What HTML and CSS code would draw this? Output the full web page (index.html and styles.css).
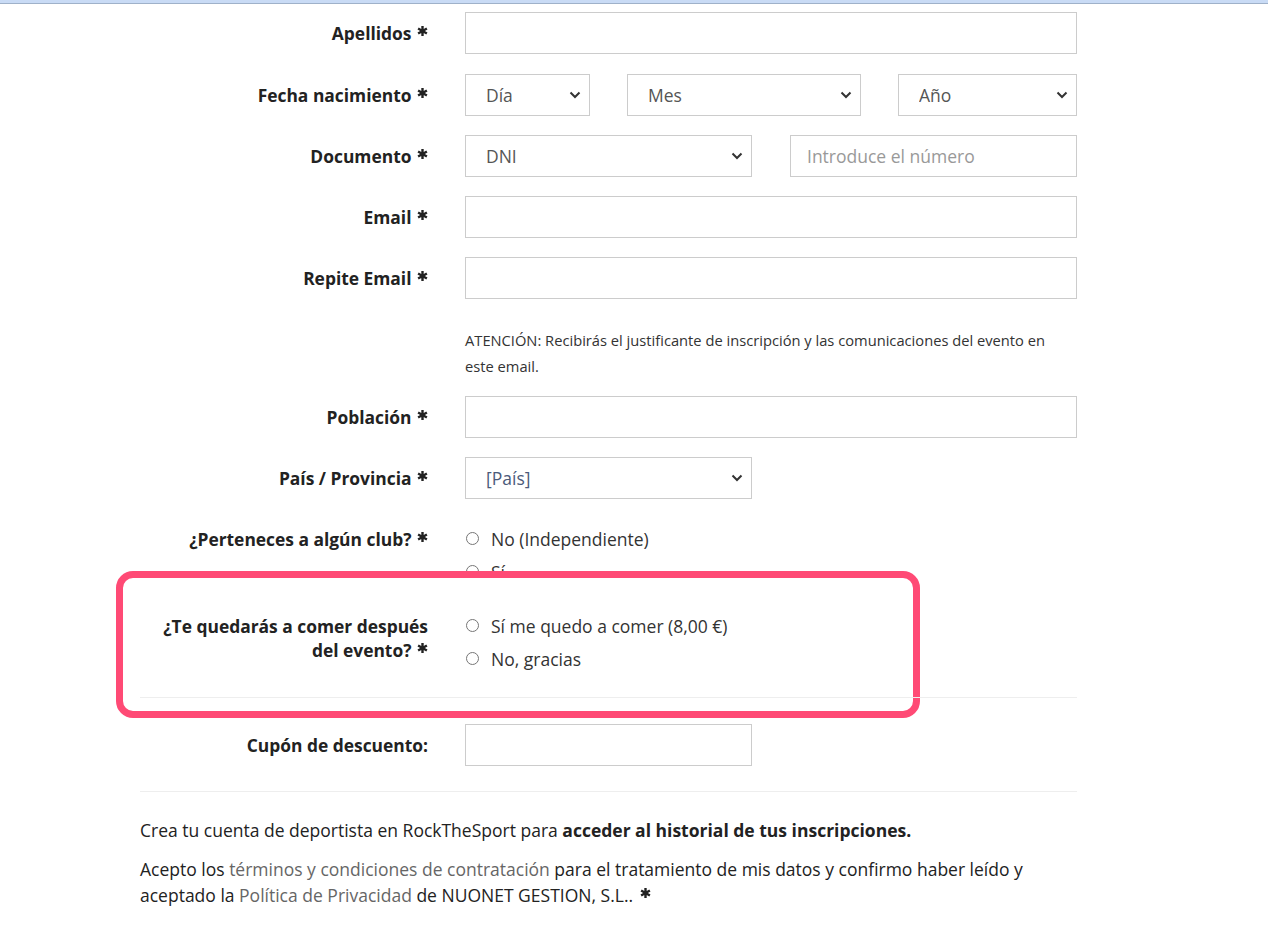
FILE: index.html
```html
<!DOCTYPE html>
<html>
<head>
<meta charset="utf-8">
<title>Inscripción</title>
<link rel="stylesheet" href="styles.css">
</head>
<body>
<div class="topbar"></div>
<form class="form">
	<div class="row first">
		<label class="label">Apellidos <svg class="req" viewBox="0 0 12 12"><path d="M6 0.5V11.5M1.2 3.2L10.8 8.8M1.2 8.8L10.8 3.2"/></svg></label>
		<div class="field"><input class="input" type="text"></div>
	</div>
	<div class="row">
		<label class="label">Fecha nacimiento <svg class="req" viewBox="0 0 12 12"><path d="M6 0.5V11.5M1.2 3.2L10.8 8.8M1.2 8.8L10.8 3.2"/></svg></label>
		<div class="field split">
			<select class="input dia"><option>Día</option></select>
			<select class="input mes"><option>Mes</option></select>
			<select class="input anio"><option>Año</option></select>
		</div>
	</div>
	<div class="row">
		<label class="label">Documento <svg class="req" viewBox="0 0 12 12"><path d="M6 0.5V11.5M1.2 3.2L10.8 8.8M1.2 8.8L10.8 3.2"/></svg></label>
		<div class="field split">
			<select class="input half"><option>DNI</option></select>
			<input class="input half" type="text" placeholder="Introduce el número">
		</div>
	</div>
	<div class="row">
		<label class="label">Email <svg class="req" viewBox="0 0 12 12"><path d="M6 0.5V11.5M1.2 3.2L10.8 8.8M1.2 8.8L10.8 3.2"/></svg></label>
		<div class="field"><input class="input" type="text"></div>
	</div>
	<div class="row">
		<label class="label">Repite Email <svg class="req" viewBox="0 0 12 12"><path d="M6 0.5V11.5M1.2 3.2L10.8 8.8M1.2 8.8L10.8 3.2"/></svg></label>
		<div class="field"><input class="input" type="text"></div>
	</div>
	<div class="row help-row">
		<div></div>
		<p class="help">ATENCIÓN: Recibirás el justificante de inscripción y las comunicaciones del evento en este email.</p>
	</div>
	<div class="row">
		<label class="label">Población <svg class="req" viewBox="0 0 12 12"><path d="M6 0.5V11.5M1.2 3.2L10.8 8.8M1.2 8.8L10.8 3.2"/></svg></label>
		<div class="field"><input class="input" type="text"></div>
	</div>
	<div class="row">
		<label class="label">País / Provincia <svg class="req" viewBox="0 0 12 12"><path d="M6 0.5V11.5M1.2 3.2L10.8 8.8M1.2 8.8L10.8 3.2"/></svg></label>
		<div class="field"><select class="input half pais"><option>[País]</option></select></div>
	</div>
	<div class="row radio-row">
		<label class="label">¿Perteneces a algún club? <svg class="req" viewBox="0 0 12 12"><path d="M6 0.5V11.5M1.2 3.2L10.8 8.8M1.2 8.8L10.8 3.2"/></svg></label>
		<div class="field radios">
			<label class="radio"><input type="radio" name="club">No (Independiente)</label>
			<label class="radio"><input type="radio" name="club">Sí</label>
		</div>
	</div>
	<div class="highlight">
		<div class="row radio-row">
			<label class="label">¿Te quedarás a comer después del evento? <svg class="req" viewBox="0 0 12 12"><path d="M6 0.5V11.5M1.2 3.2L10.8 8.8M1.2 8.8L10.8 3.2"/></svg></label>
			<div class="field radios">
				<label class="radio"><input type="radio" name="comer">Sí me quedo a comer (8,00 €)</label>
				<label class="radio"><input type="radio" name="comer">No, gracias</label>
			</div>
		</div>
		<hr class="sep">
	</div>
	<div class="row coupon">
		<label class="label">Cupón de descuento:</label>
		<div class="field"><input class="input half" type="text"></div>
	</div>
	<hr class="sep">
	<p class="text">Crea tu cuenta de deportista en RockTheSport para <b>acceder al historial de tus inscripciones.</b></p>
	<p class="text terms">Acepto los <a href="#">términos y condiciones de contratación</a> para el tratamiento de mis datos y confirmo haber leído y aceptado la <a href="#">Política de Privacidad</a> de NUONET GESTION, S.L.. <svg class="req" viewBox="0 0 12 12"><path d="M6 0.5V11.5M1.2 3.2L10.8 8.8M1.2 8.8L10.8 3.2"/></svg></p>
</form>
</body>
</html>
```

FILE: styles.css
```css
*, *::before, *::after{
	margin: 0;
	padding: 0;
	box-sizing: border-box;
}
body{
	font-family: "Open Sans", "Liberation Sans", sans-serif;
	font-size: 17.5px;
	color: #222;
	background: #fff;
}
.topbar{
	height: 4px;
	background-color: #c9dbf5;
	border-bottom: 1px solid #9fb1c9;
}
.form{
	width: 937px;
	margin-left: 140px;
	padding-top: 8px;
}
.row{
	display: grid;
	grid-template-columns: 300px 612px;
	column-gap: 25px;
	align-items: center;
	margin-bottom: 19px;
}
.row.first{
	margin-bottom: 20px;
}
.label{
	text-align: right;
	padding-right: 12px;
	font-weight: bold;
	font-size: 17.4px;
	line-height: 24px;
}
.req{
	width: 11px;
	height: 12px;
	vertical-align: 3px;
	margin-left: 1px;
	fill: none;
	stroke: #222;
	stroke-width: 2.6;
}
.field{
	display: flex;
}
.split{
	gap: 37px;
}
.input{
	height: 42px;
	width: 100%;
	border: 1px solid #ccc;
	border-radius: 0;
	background: #fff;
	font-family: "Open Sans", "Liberation Sans", sans-serif;
	font-size: 17.5px;
	color: #555;
	padding: 0 16px;
	outline: none;
}
select.input{
	-webkit-appearance: none;
	appearance: none;
	padding-left: 20px;
	padding-right: 30px;
	background-image: url("data:image/svg+xml;utf8,<svg xmlns='http://www.w3.org/2000/svg' width='12' height='8' viewBox='0 0 12 8'><path d='M1.5 1.5L6 6L10.5 1.5' fill='none' stroke='%23333' stroke-width='2'/></svg>");
	background-repeat: no-repeat;
	background-position: right 8px center;
	background-size: 12px 8px;
}
.input::placeholder{
	color: #999;
}
.dia{ width: 125px; }
.mes{ width: 234px; }
.anio{ width: 179px; }
.half{ width: 287px; flex: none; }
.split .half + .half{ margin-left: 1px; }
.pais{ color: #4b5a7a; }
.help-row{
	margin-bottom: 17px;
	padding-top: 9px;
}
.help{
	font-size: 14.7px;
	line-height: 26px;
	color: #333;
}
.radio-row{
	align-items: start;
	margin-bottom: 17px;
}
.radio-row .label{
	padding-top: 9px;
}
.radios{
	flex-direction: column;
	padding-top: 4px;
}
.radio{
	display: flex;
	align-items: center;
	height: 33px;
	font-size: 17.5px;
	color: #333;
}
.radio input{
	width: 13px;
	height: 13px;
	margin: 0 12px 0 1px;
}
.highlight{
	position: relative;
}
.highlight::before{
	content: "";
	position: absolute;
	left: -24px;
	top: -34px;
	width: 804px;
	height: 147px;
	border: 7px solid #ff4a75;
	border-radius: 17px;
	background: #fff;
}
.highlight .row,
.highlight .sep{
	position: relative;
}
.highlight .row{
	margin-bottom: 22px;
}
.sep{
	border: 0;
	border-top: 1px solid #eee;
}
.coupon{
	margin: 26px 0 25px;
}
.text{
	font-size: 17.5px;
	line-height: 26px;
	margin-top: 25px;
}
.terms{
	margin-top: 13px;
}
.terms .req{
	margin-left: 2px;
}
a{
	color: #666;
	text-decoration: none;
}
```
